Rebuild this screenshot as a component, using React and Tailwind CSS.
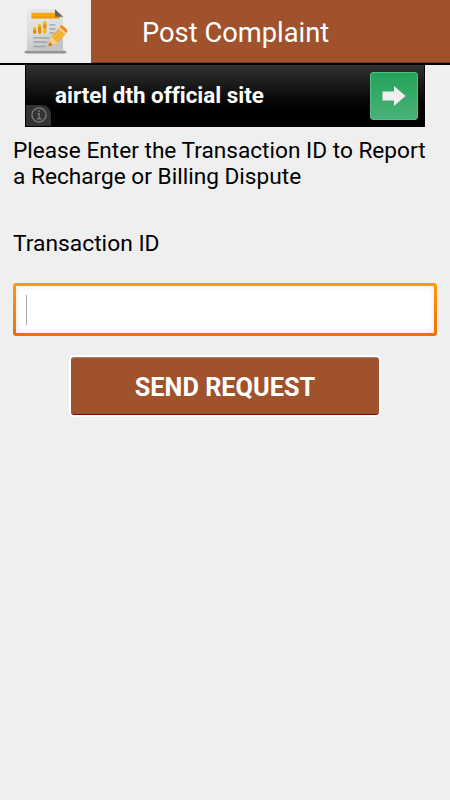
import React, { useState } from 'react';

const ReportIcon = () => (
  <svg width="44" height="45" viewBox="0 0 44 45" fill="none">
    <defs>
      <linearGradient id="sheet" x1="0" y1="0" x2="0.3" y2="1">
        <stop offset="0" stopColor="#e9e9e9" />
        <stop offset="0.6" stopColor="#dcdcdc" />
        <stop offset="1" stopColor="#c4c4c4" />
      </linearGradient>
    </defs>
    <path d="M2 41.6h38.5l2.6 2q-1.5.9-4 .9H4q-3 0-4-1z" fill="#949494" />
    <path d="M5.5 0H31l8 8v31.500q0 2.500-2.500 2.500H5.500Q3 42 3 39.500v-37Q3 0 5.500 0z" fill="url(#sheet)" />
    <path d="M7.500 3.800H31l5 4.200v1H7.500z" fill="#f4a90a" />
    <path d="M7.500 7.500h27.500v2h-27.500z" fill="#ea9c08" />
    <path d="M31 0.200l8.200 7.600H31z" fill="#666" />
    <g strokeLinecap="round" strokeWidth="3.200">
      <path d="M10.700 19.500v3.500M15.700 16.500v6.500M20.800 13.500v9.500" stroke="#f6b60b" />
      <path d="M10.700 22v1.300M15.700 19v4.300M20.800 16.500v1.500" stroke="#e88b13" />
    </g>
    <g stroke="#9ca5ab" strokeWidth="1.300" strokeLinecap="round">
      <path d="M26 15.800h5M26 20h5M26 24h4" />
      <path d="M10 29q4-.8 8 0h7M10 33h13M10 37.500h11" />
    </g>
    <path d="M25 36.500l2.500-9L36 18l6.500 6L34 34z" fill="#eeb232" />
    <path d="M30 28.500l7.500-8M33 31l7-7.500" stroke="#f3c04a" strokeWidth="1" />
    <path d="M25 36.500l2.500-9 6.500 6.500z" fill="#f5cd86" />
    <path d="M24.700 37l1-3.500 2.600 2.300z" fill="#ed7512" stroke="#ed7512" />
    <path d="M35.500 17.500q1.800-2 4-.2l2.800 2.500q2 2 .2 4z" fill="#f18617" />
    <path d="M34.700 18.500l6.700 6" stroke="#f4d9bc" strokeWidth="1.200" />
  </svg>
);

const Header = () => (
  <header className="flex h-[65px] border-b-2 border-black bg-[#efefef]">
    <div className="w-[91px] pl-6 pt-[9px]">
      <ReportIcon />
    </div>
    <h1 className="flex-1 border-b border-[#743b1f] bg-[#a0522d] pl-[51px] pt-[14px] text-[27.3px] leading-[38px] text-white">
      Post Complaint
    </h1>
  </header>
);

const AdBanner = () => (
  <div className="relative mx-auto flex h-[62px] w-[400px] items-center justify-between border border-t-0 border-black bg-linear-to-b from-[#333333] to-black pl-[29px] pr-[6px]">
    <span className="pb-[2px] text-[22.4px] font-bold leading-[30px] text-white [font-variant-ligatures:none]">
      airtel dth official site
    </span>
    <div className="flex h-12 w-12 items-center justify-center rounded-[3px] border border-[#58c086] bg-linear-to-b from-[#22a35a] to-[#48b178]">
      <svg width="24" height="20" viewBox="0 0 24 20" className="mt-px">
        <path d="M0.500 5.500H12V0L23.500 10 12 20v-5.500H0.500z" fill="#efefef" />
      </svg>
    </div>
    <div className="absolute bottom-0 left-0 flex h-[21px] w-[25px] items-center justify-center rounded-tr-[9px] bg-[#333333] pb-px">
      <svg width="16" height="16" viewBox="0 0 16 16" fill="none" stroke="#737373" strokeWidth="1.500">
        <circle cx="8" cy="8" r="7" />
        <path d="M6.500 6.800h1.700v4.700M6 11.700h4.500" />
        <path d="M7.200 4.200h1.700" strokeWidth="1.800" />
      </svg>
    </div>
  </div>
);

export default function App() {
  const [transactionId, setTransactionId] = useState('');

  return (
    <div className="h-[800px] w-[450px] overflow-hidden bg-[#efefef] font-['Roboto',sans-serif] text-black">
      <Header />
      <AdBanner />
      <main className="px-[13px] pt-[11px]">
        <p className="whitespace-nowrap text-[22.65px] leading-[26px]">
          Please Enter the Transaction ID to Report
          <br />
          a Recharge or Billing Dispute
        </p>
        <label htmlFor="transaction" className="mt-10 block text-[22.8px] leading-[27px]">
          Transaction ID
        </label>
        <div className="mt-[26px] h-[53px] rounded-[3px] bg-linear-to-b from-[#ff9a12] to-[#ed7000] p-[3px]">
          <div className="flex h-full items-center bg-white pl-[10px] shadow-[inset_0_0_6px_#e4e4e4]">
            <div className="h-[30px] w-px bg-[#aaaaaa]" />
            <input
              id="transaction"
              value={transactionId}
              onChange={(e) => setTransactionId(e.target.value)}
              className="h-full flex-1 bg-transparent text-[22.5px] outline-none"
            />
          </div>
        </div>
        <div className="mx-auto mt-[19px] h-[62px] w-[312px] rounded-[5px] bg-white p-[2px]">
          <button className="h-[58px] w-full rounded-[3px] border-b border-t border-b-[#7c0a02] border-t-[#a58472] bg-[#a0522d] pt-[4px] text-[25.3px] font-bold text-white">
            SEND REQUEST
          </button>
        </div>
      </main>
    </div>
  );
}
